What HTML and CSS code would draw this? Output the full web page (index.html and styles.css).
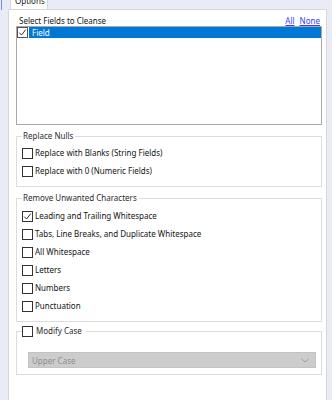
FILE: index.html
```html
<!DOCTYPE html>
<html lang="en">
<head>
    <meta charset="UTF-8">
    <meta name="viewport" content="width=device-width, initial-scale=1.0">
    <title>Data Cleansing - Options</title>
    <link rel="stylesheet" href="styles.css">
</head>
<body>
    <div class="tabstrip">
        <span class="focus-edge"></span>
        <div class="tab">Options</div>
    </div>
    <div class="panel">
        <div class="field-head">
            <span>Select Fields to Cleanse</span>
            <span class="links"><a href="#">All</a><a href="#">None</a></span>
        </div>
        <div class="listbox">
            <div class="list-row">
                <span class="cb checked list-cb">
                    <svg viewBox="0 0 9 9" width="9" height="9"><path d="M1.2 4.6 L3.5 7 L7.8 1.6" fill="none" stroke="#333" stroke-width="1"/></svg>
                </span>
                <span class="row-label">Field</span>
            </div>
        </div>

        <fieldset class="group nulls-group">
            <legend>Replace Nulls</legend>
            <label class="opt"><span class="cb"></span>Replace with Blanks (String Fields)</label>
            <label class="opt"><span class="cb"></span>Replace with 0 (Numeric Fields)</label>
        </fieldset>

        <fieldset class="group chars-group">
            <legend>Remove Unwanted Characters</legend>
            <label class="opt"><span class="cb checked">
                <svg viewBox="0 0 9 9" width="9" height="9"><path d="M1.2 4.6 L3.5 7 L7.8 1.6" fill="none" stroke="#333" stroke-width="1"/></svg>
            </span>Leading and Trailing Whitespace</label>
            <label class="opt"><span class="cb"></span>Tabs, Line Breaks, and Duplicate Whitespace</label>
            <label class="opt"><span class="cb"></span>All Whitespace</label>
            <label class="opt"><span class="cb"></span>Letters</label>
            <label class="opt"><span class="cb"></span>Numbers</label>
            <label class="opt"><span class="cb"></span>Punctuation</label>
        </fieldset>

        <fieldset class="group case-group">
            <legend class="check-legend"><label class="opt"><span class="cb"></span>Modify Case</label></legend>
            <div class="dropdown">
                <span>Upper Case</span>
                <svg viewBox="0 0 8 5" width="8" height="5"><path d="M0.5 0.8 L4 4 L7.5 0.8" fill="none" stroke="#9c9c9c" stroke-width="1"/></svg>
            </div>
        </fieldset>
    </div>
</body>
</html>
```

FILE: styles.css
```css
html, body {
    height: 100%;
}

body {
    margin: 0;
    width: 332px;
    height: 400px;
    overflow: hidden;
    background-color: #e9ecf7;
    font-family: "Noto Sans", "DejaVu Sans", sans-serif;
    font-size: 8px;
    color: #141414;
    display: flex;
    flex-direction: column;
}

/* tab row at the top, mostly cut off */
.tabstrip {
    height: 9px;
    display: flex;
    padding-left: 10px;
    position: relative;
}

.focus-edge {
    position: absolute;
    left: 1px;
    top: 0;
    width: 1px;
    height: 10px;
    background-color: #6c93d6;
}

.tab {
    width: 38px;
    height: 10px;
    margin-top: -1px;
    padding-left: 4px;
    box-sizing: border-box;
    background-color: #ffffff;
    border-left: 1px solid #d6d6d6;
    border-right: 1px solid #d6d6d6;
    line-height: 4px;
    overflow: hidden;
}

.panel {
    flex: 1;
    margin: 0 5px 0 8px;
    background-color: #ffffff;
    border: 1px solid #d8d8d8;
    border-bottom: none;
    padding: 6px 4px 0 7px;
}

.field-head {
    display: flex;
    justify-content: space-between;
    align-items: center;
    height: 10px;
    line-height: 10px;
    padding-left: 3px;
}

.links {
    padding-right: 2px;
}

.links a {
    color: #3a3aff;
    text-decoration: underline;
    margin-left: 5px;
}

.listbox {
    height: 99px;
    border: 1px solid #a8a8a8;
    box-sizing: border-box;
}

.list-row {
    display: flex;
    align-items: center;
    height: 11px;
}

.row-label {
    flex: 1;
    height: 11px;
    line-height: 11px;
    background-color: #0078d7;
    color: #ffffff;
    padding-left: 3px;
    margin-left: 1px;
}

.cb {
    display: inline-flex;
    align-items: center;
    justify-content: center;
    width: 11px;
    height: 11px;
    box-sizing: border-box;
    border: 1px solid #333333;
    background-color: #ffffff;
    flex-shrink: 0;
}

.list-cb {
    border-color: #555555;
}

.group {
    margin: 6px 0 0 0;
    border: 1px solid #dcdcdc;
    padding: 3px 5px 6px 5px;
    min-width: 0;
}

.group legend {
    padding: 0 2px 0 1px;
    line-height: 10px;
    color: #2b2b2b;
}

.chars-group {
    padding-top: 4px;
}

.group .check-legend {
    padding: 0 4px 0 0;
}

.opt {
    display: flex;
    align-items: center;
    gap: 2px;
    height: 18px;
    line-height: 18px;
}

.check-legend .opt {
    height: 10px;
    line-height: 10px;
    gap: 3px;
}

.case-group {
    margin-top: 4px;
    padding-top: 16px;
    padding-bottom: 6px;
}

.dropdown {
    display: flex;
    align-items: center;
    justify-content: space-between;
    height: 16px;
    margin-left: 6px;
    padding: 0 6px 0 3px;
    background-color: #cccccc;
    border: 1px solid #c2c2c2;
    box-sizing: border-box;
    color: #8c8c8c;
}
```
